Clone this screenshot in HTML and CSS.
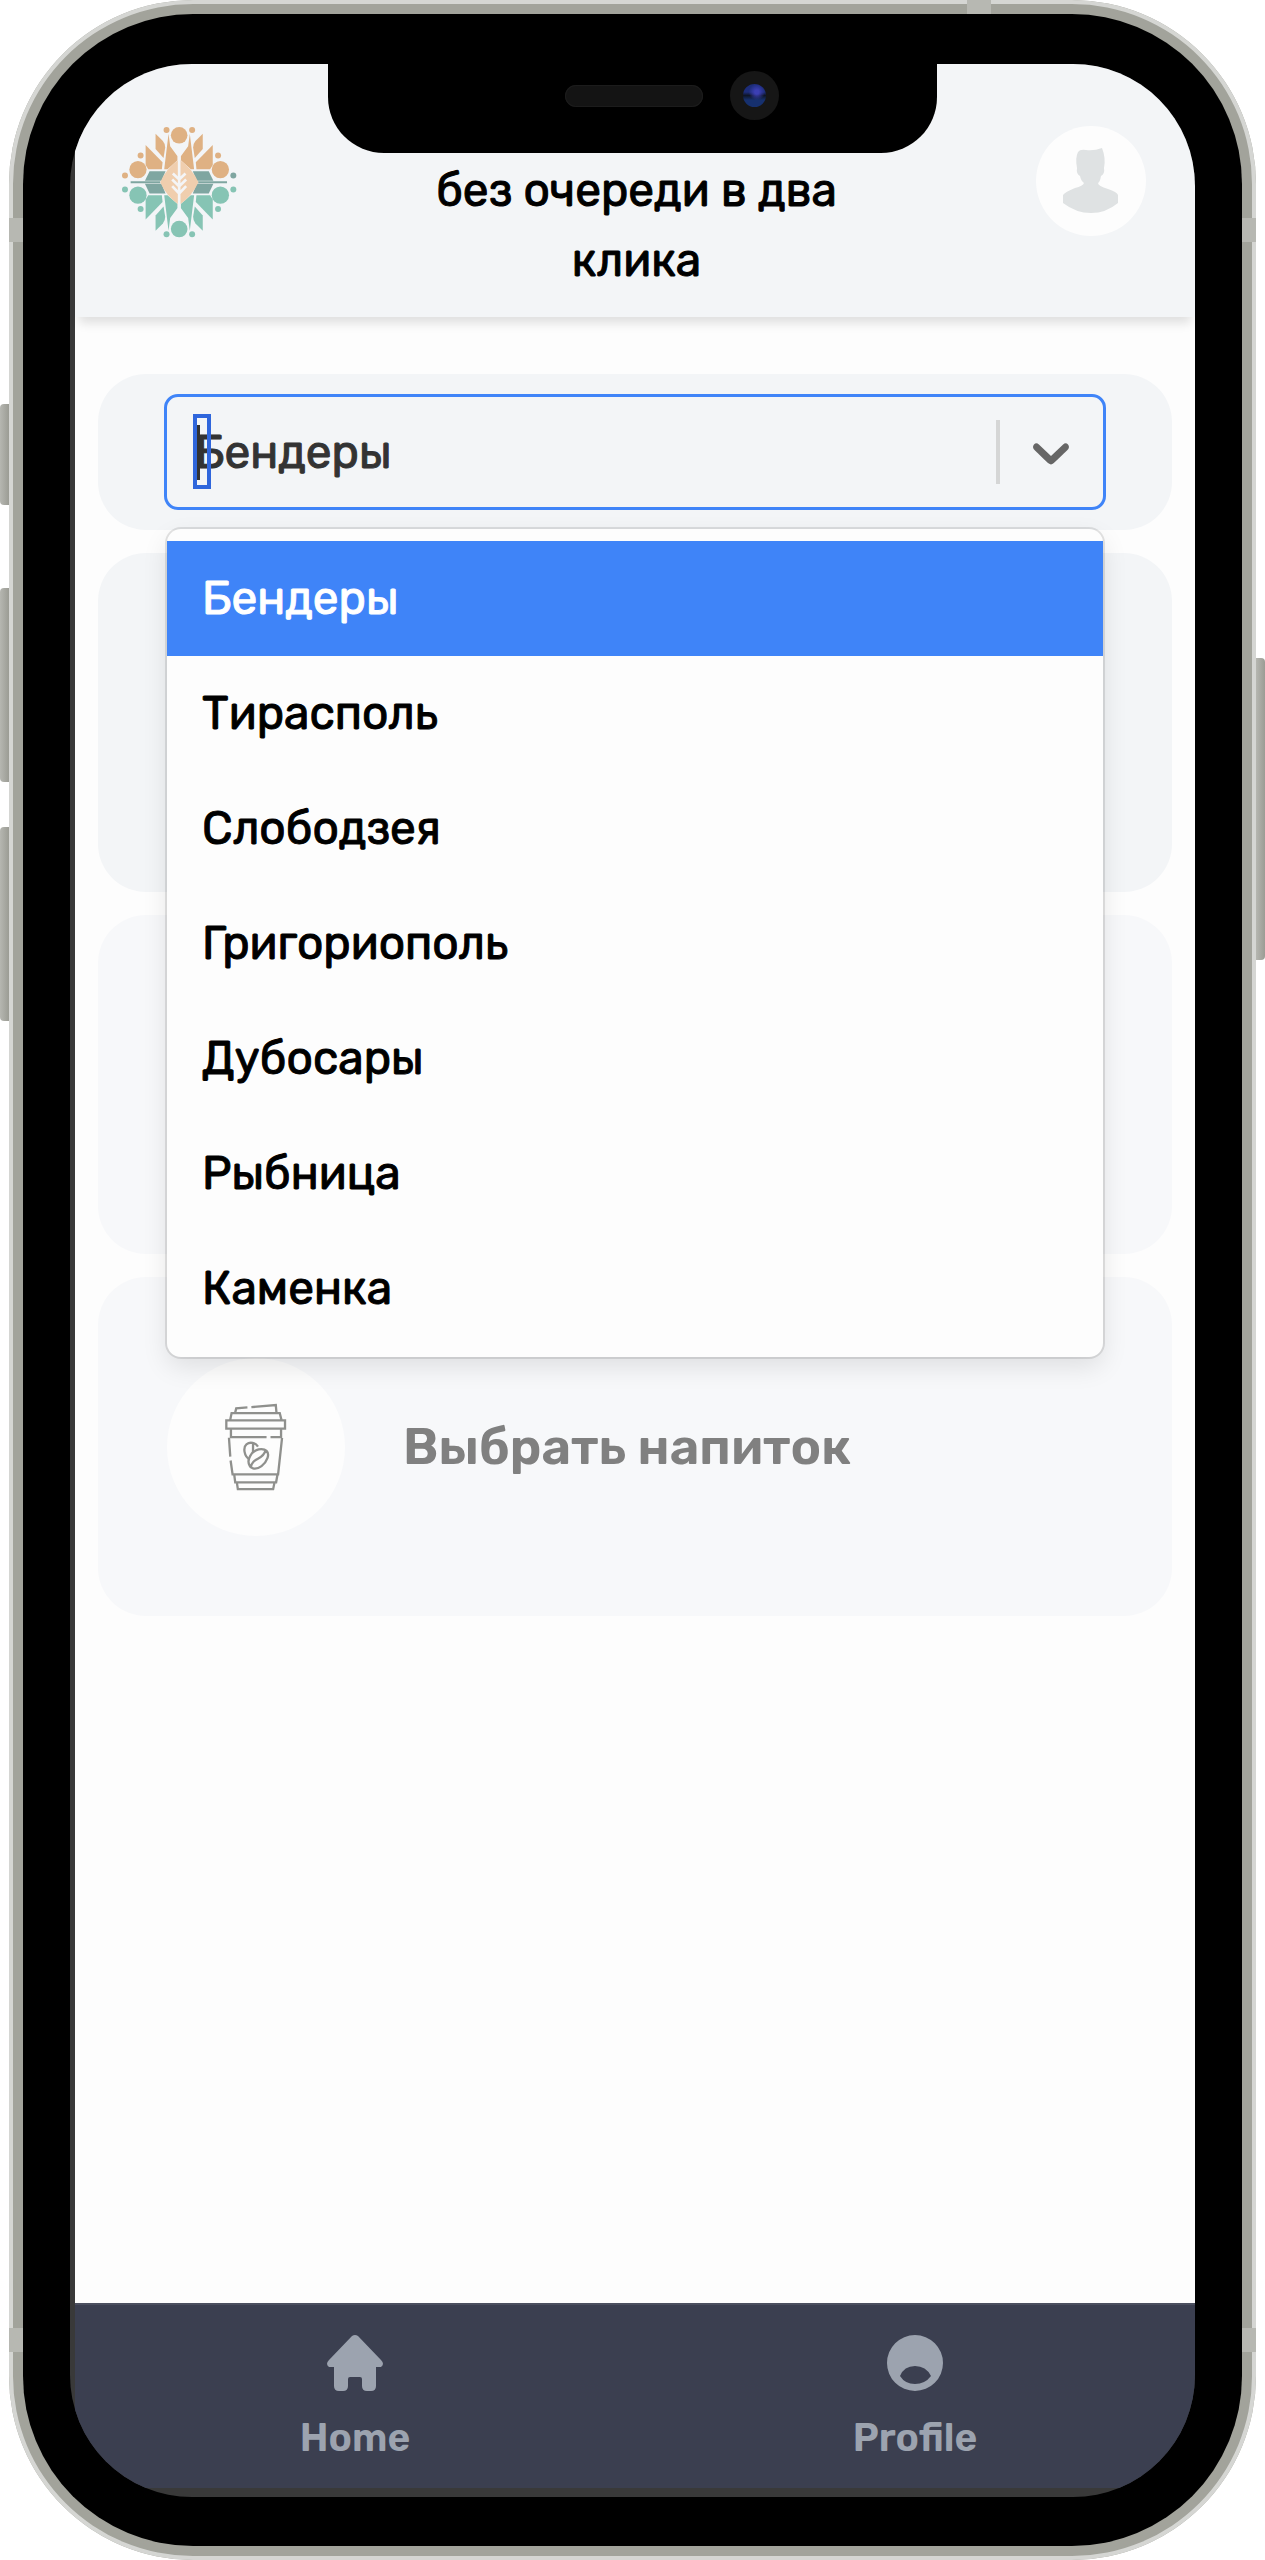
FILE: index.html
```html
<!DOCTYPE html>
<html lang="ru">
<head>
    <meta charset="UTF-8">
    <meta name="viewport" content="width=device-width, initial-scale=1.0">
    <title>Кофе без очереди</title>
    <link rel="stylesheet" href="styles.css">
</head>
<body>
    <div class="phone">
        <!-- Side keys -->
        <span class="key key-mute"></span>
        <span class="key key-up"></span>
        <span class="key key-down"></span>
        <span class="key key-power"></span>
        <!-- Antenna bands -->
        <span class="band band-left-top"></span>
        <span class="band band-right-top"></span>
        <span class="band band-left-bottom"></span>
        <span class="band band-right-bottom"></span>
        <span class="band band-top"></span>

        <div class="bezel">
            <div class="notch">
                <span class="speaker"></span>
                <span class="camera"><span class="lens"></span></span>
            </div>

            <div class="screen">
                <header class="header">
                    <svg class="logo" viewBox="65 62 346 335" aria-label="Logo">
                        <g fill="#dfb183">
                            <circle cx="237" cy="89" r="25"/>
                            <circle cx="113" cy="192" r="26"/>
                            <circle cx="361" cy="192" r="26"/>
                            <circle cx="199" cy="73" r="9"/>
                            <circle cx="276" cy="73" r="9"/>
                            <circle cx="121" cy="150" r="9"/>
                            <circle cx="354" cy="150" r="9"/>
                            <circle cx="74" cy="210" r="9"/>
                            <path d="M166 84 L188 106 Q195 114 195 126 L190 157 L166 130 Z"/>
                            <path d="M308 84 L286 106 Q279 114 279 126 L284 157 L308 130 Z"/>
                            <path d="M136 118 L187 170 L185 191 L144 191 L136 178 Z"/>
                            <path d="M338 118 L287 170 L289 191 L330 191 L338 178 Z"/>
                            <path d="M205 84 L210 122 L232 152 L232 164 L202 191 L192 191 Z"/>
                            <path d="M269 84 L264 122 L242 152 L242 164 L272 191 L282 191 Z"/>
                        </g>
                        <g fill="#7fa6a1">
                            <path d="M148 197 H196 L184 226 H134 Z"/>
                            <path d="M326 197 H278 L290 226 H340 Z"/>
                            <path d="M134 235 H184 L196 264 H148 Z"/>
                            <path d="M340 235 H290 L278 264 H326 Z"/>
                            <path d="M91 227 H180 V233 H91 Z"/>
                            <path d="M294 227 H381 V233 H294 Z"/>
                            <circle cx="400" cy="210" r="9"/>
                        </g>
                        <g fill="#86c4b4">
                            <circle cx="237" cy="371" r="25"/>
                            <circle cx="113" cy="269" r="26"/>
                            <circle cx="361" cy="269" r="26"/>
                            <circle cx="199" cy="387" r="9"/>
                            <circle cx="276" cy="387" r="9"/>
                            <circle cx="121" cy="311" r="9"/>
                            <circle cx="354" cy="311" r="9"/>
                            <circle cx="74" cy="252" r="9"/>
                            <circle cx="400" cy="252" r="9"/>
                            <path d="M166 376 L188 354 Q195 346 195 334 L190 303 L166 330 Z"/>
                            <path d="M308 376 L286 354 Q279 346 279 334 L284 303 L308 330 Z"/>
                            <path d="M136 342 L187 290 L185 269 L144 269 L136 282 Z"/>
                            <path d="M338 342 L287 290 L289 269 L330 269 L338 282 Z"/>
                            <path d="M205 376 L210 338 L232 308 L232 296 L202 269 L192 269 Z"/>
                            <path d="M269 376 L264 338 L242 308 L242 296 L272 269 L282 269 Z"/>
                        </g>
                        <path fill="#f0ceae" d="M237 161 Q277 190 295 230 Q277 270 237 299 Q197 270 180 230 Q197 190 237 161 Z"/>
                        <path fill="none" stroke="#f4f5f7" stroke-width="8" d="M237 136 V318 M218 204 L237 222 L256 204 M216 222 L237 243 L258 222 M216 242 L237 264 L258 242"/>
                    </svg>
                    <p class="slogan">без очереди в два клика</p>
                    <a class="avatar" href="#profile" aria-label="Profile">
                        <svg viewBox="0 0 110 110">
                            <path fill="#dfe2e3" d="M42 26 Q44 23 50 24 Q58 25 66 22 Q70 32 68 42 Q69 48 65 50 Q64 56 62 57 Q62 60 72 63 Q81 66 82 69 V77 Q70 87 55 87 Q40 87 27 77 V69 Q29 66 39 62 Q47 60 48 57 Q45 55 44 50 Q40 48 41 42 Q39 32 42 26 Z"/>
                        </svg>
                    </a>
                </header>

                <main class="content">
                    <section class="card card-select">
                        <div class="select-box">
                            <select class="select" id="city" name="city" aria-label="Город">
                                <option selected>Бендеры</option>
                                <option>Тирасполь</option>
                                <option>Слободзея</option>
                                <option>Григориополь</option>
                                <option>Дубосары</option>
                                <option>Рыбница</option>
                                <option>Каменка</option>
                            </select>
                            <span class="caret"></span>
                            <span class="indicator">
                                <svg viewBox="0 0 20 20">
                                    <path d="M4.516 7.548c0.436-0.446 1.043-0.481 1.576 0l3.908 3.747 3.908-3.747c0.533-0.481 1.141-0.446 1.574 0 0.436 0.445 0.408 1.197 0 1.615-0.406 0.418-4.695 4.502-4.695 4.502-0.217 0.223-0.502 0.335-0.787 0.335s-0.57-0.112-0.789-0.335c0 0-4.287-4.084-4.695-4.502s-0.436-1.17 0-1.615z"/>
                                </svg>
                            </span>
                            <ul class="menu" role="listbox">
                                <li class="option active" role="option" aria-selected="true">Бендеры</li>
                                <li class="option" role="option">Тирасполь</li>
                                <li class="option" role="option">Слободзея</li>
                                <li class="option" role="option">Григориополь</li>
                                <li class="option" role="option">Дубосары</li>
                                <li class="option" role="option">Рыбница</li>
                                <li class="option" role="option">Каменка</li>
                            </ul>
                        </div>
                    </section>

                    <section class="card"></section>
                    <section class="card disabled"></section>

                    <section class="card disabled">
                        <span class="card-icon">
                            <svg viewBox="76 64 188 262">
                                <path d="M107 90 L110 78 L144 75 M156 74 L230 68 L232 90 M92 112 L96 92 H242 L247 112 M80 114 H258 V139 H80 Z M94 140 V165 H202 M214 165 H246 V140 M88 167 L92 224 M93 236 L99 278 H237 L249 167 M104 279 L107 302 H231 L235 279 M112 303 L115 323 H222 L226 303"/>
                                <path d="M150 232 C134 224 130 196 141 187 C152 178 168 182 176 194 M161 185 V210"/>
                                <path d="M151 252 C140 234 156 208 178 202 C200 198 211 210 205 228 C198 248 178 264 161 260 Q153 258 151 252 M155 256 C158 226 192 236 199 205"/>
                            </svg>
                        </span>
                        <h2>Выбрать напиток</h2>
                    </section>
                </main>

                <nav class="tabs">
                    <a href="#home" class="tab">
                        <svg viewBox="0 0 56 56">
                            <path d="M25 1 Q28 -1 31 1 L54 25 Q58 29 54 32 H49 V51 Q49 56 44 56 H40 Q35 56 35 51 V44 Q35 42 33 42 H23 Q21 42 21 44 V51 Q21 56 16 56 H12 Q7 56 7 51 V32 H2 Q-2 29 2 25 Z"/>
                        </svg>
                        <span>Home</span>
                    </a>
                    <a href="#profile" class="tab">
                        <svg viewBox="0 0 56 56">
                            <path fill-rule="evenodd" d="M28 0 A28 28 0 1 1 28 56 A28 28 0 1 1 28 0 Z M13 41 Q18 49 28 49 Q38 49 44 41 Q39 31 28 31 Q17 31 13 41 Z"/>
                        </svg>
                        <span>Profile</span>
                    </a>
                </nav>
            </div>
        </div>
    </div>
</body>
</html>
```

FILE: styles.css
```css
* {
    box-sizing: border-box;
}

body {
    margin: 0;
    font-family: Rubik, Roboto, sans-serif;
    font-size: 46px;
    font-weight: 400;
    color: #000;
    background-color: #fff;
}

/* Phone frame */
.phone {
    position: relative;
    display: flex;
    min-height: 100vh;
    margin: 0 9px;
    padding: 14px;
    border-radius: 184px;
    background-color: #a2a39b;
    box-shadow: inset 0 0 0 4px #d5d6d3;
}

.bezel {
    position: relative;
    display: flex;
    flex: 1;
    padding: 50px 47px 49px;
    border-radius: 170px;
    background-color: #000;
}

.key {
    position: absolute;
    left: -9px;
    width: 9px;
    border-radius: 4px 0 0 4px;
    background: linear-gradient(to right, #b6b7b1, #9b9c94);
}

.key-mute {
    top: 404px;
    height: 101px;
}

.key-up {
    top: 588px;
    height: 194px;
}

.key-down {
    top: 827px;
    height: 194px;
}

.key-power {
    top: 658px;
    right: -9px;
    left: auto;
    height: 302px;
    border-radius: 0 4px 4px 0;
}

.band {
    position: absolute;
    width: 14px;
    height: 24px;
    background-color: #b7b8b2;
}

.band-left-top {
    top: 218px;
    left: 0;
}

.band-right-top {
    top: 218px;
    right: 0;
}

.band-left-bottom {
    bottom: 208px;
    left: 0;
}

.band-right-bottom {
    right: 0;
    bottom: 208px;
}

.band-top {
    top: 0;
    right: 265px;
    width: 24px;
    height: 14px;
}

/* Notch lies over the screen */
.notch {
    position: absolute;
    z-index: 3;
    top: 48px;
    left: 25%;
    width: 50%;
    height: 91px;
    border-radius: 0 0 56px 56px;
    background-color: #000;
}

.speaker {
    position: absolute;
    top: 23px;
    left: 50%;
    width: 138px;
    height: 22px;
    margin-left: -68px;
    border-radius: 11px;
    background-color: #141414;
    box-shadow: inset 0 0 0 1px #1c1c1c;
}

.camera {
    position: absolute;
    top: 9px;
    right: 158px;
    width: 49px;
    height: 49px;
    padding: 13px;
    border-radius: 50%;
    background-color: #161616;
}

.lens {
    display: block;
    height: 23px;
    border-radius: 50%;
    background: radial-gradient(circle at 60% 35%, #3c3fb4 10%, transparent 40%), linear-gradient(#1c2c78 35%, #0e1526 50%, #16306e 70%);
}

/* Screen */
.screen {
    display: flex;
    flex: 1;
    flex-direction: column;
    overflow: hidden;
    padding: 0 0 9px 5px;
    border-radius: 122px;
    background-color: #393939;
}

.header {
    position: relative;
    display: flex;
    justify-content: space-between;
    align-items: flex-start;
    padding: 62px 49px 21px 47px;
    background-color: #f3f5f7;
    box-shadow: 0 10px 10px -4px rgba(0, 0, 0, 0.12);
}

.logo {
    width: 115px;
    height: 112px;
}

.slogan {
    width: 420px;
    margin: 30px 0 0;
    line-height: 70px;
    text-align: center;
    -webkit-text-stroke: 1px;
}

.avatar {
    width: 110px;
    height: 110px;
    border-radius: 50%;
    background-color: #fdfdfd;
}

.content {
    display: flex;
    flex: 1;
    flex-direction: column;
    gap: 23px;
    padding: 57px 23px;
    background-color: #fdfdfd;
}

/* Cards */
.card {
    display: flex;
    align-items: center;
    gap: 58px;
    min-height: 339px;
    padding: 20px 66px 20px 69px;
    border-radius: 48px;
    background-color: #f3f5f7;
}

.card-select {
    min-height: 156px;
    padding: 20px 66px;
}

.card.disabled {
    background-color: #f7f8fa;
}

.card-icon {
    display: flex;
    justify-content: center;
    align-items: center;
    width: 178px;
    height: 178px;
    border-radius: 50%;
    background-color: #fdfdfd;
}

.card-icon svg {
    width: 62px;
    height: 88px;
    fill: none;
    stroke: #8f908d;
    stroke-width: 7;
}

h2 {
    margin: 0;
    font-size: 51px;
    font-weight: 600;
    color: #808080;
}

/* City select */
.select-box {
    position: relative;
    flex: 1;
}

.select {
    display: block;
    width: 100%;
    height: 116px;
    padding: 0 110px 0 28px;
    border: 3px solid #3f84f8;
    border-radius: 14px;
    outline: none;
    appearance: none;
    background-color: #f3f5f7;
    font: inherit;
    color: #333;
    -webkit-text-stroke: 1px;
}

.caret {
    position: absolute;
    top: 20px;
    left: 29px;
    width: 18px;
    height: 75px;
    border: 4px solid #2f66dc;
}

.caret::before {
    content: "";
    display: block;
    width: 3px;
    height: 55px;
    margin-top: 7px;
    background-color: #333;
}

.indicator {
    position: absolute;
    top: 26px;
    right: 24px;
    display: flex;
    align-items: center;
    height: 64px;
    padding-left: 20px;
    border-left: 4px solid #d5d6d6;
    pointer-events: none;
}

.indicator svg {
    width: 62px;
    height: 62px;
    fill: #666;
}

.menu {
    position: absolute;
    z-index: 2;
    top: 135px;
    right: 3px;
    left: 3px;
    margin: 0;
    padding: 12px 0 11px;
    border-radius: 14px;
    background-color: #fdfdfd;
    box-shadow: 0 0 0 2px rgba(0, 0, 0, 0.1), 0 10px 26px rgba(0, 0, 0, 0.1);
    list-style: none;
}

.option {
    padding: 0 35px;
    line-height: 115px;
    -webkit-text-stroke: 1px;
}

.option.active {
    background-color: #3f84f8;
    color: #fff;
}

/* Bottom navigation */
.tabs {
    display: flex;
    height: 185px;
    border-top: 2px solid #4b4f5f;
    background-color: #3b3f50;
}

.tab {
    display: flex;
    flex: 1;
    flex-direction: column;
    align-items: center;
    gap: 23px;
    padding-top: 30px;
    font-size: 39px;
    font-weight: 600;
    line-height: 48px;
    color: #9ca3af;
    text-decoration: none;
}

.tab svg {
    width: 56px;
    height: 56px;
    fill: #9ca3af;
}
```
